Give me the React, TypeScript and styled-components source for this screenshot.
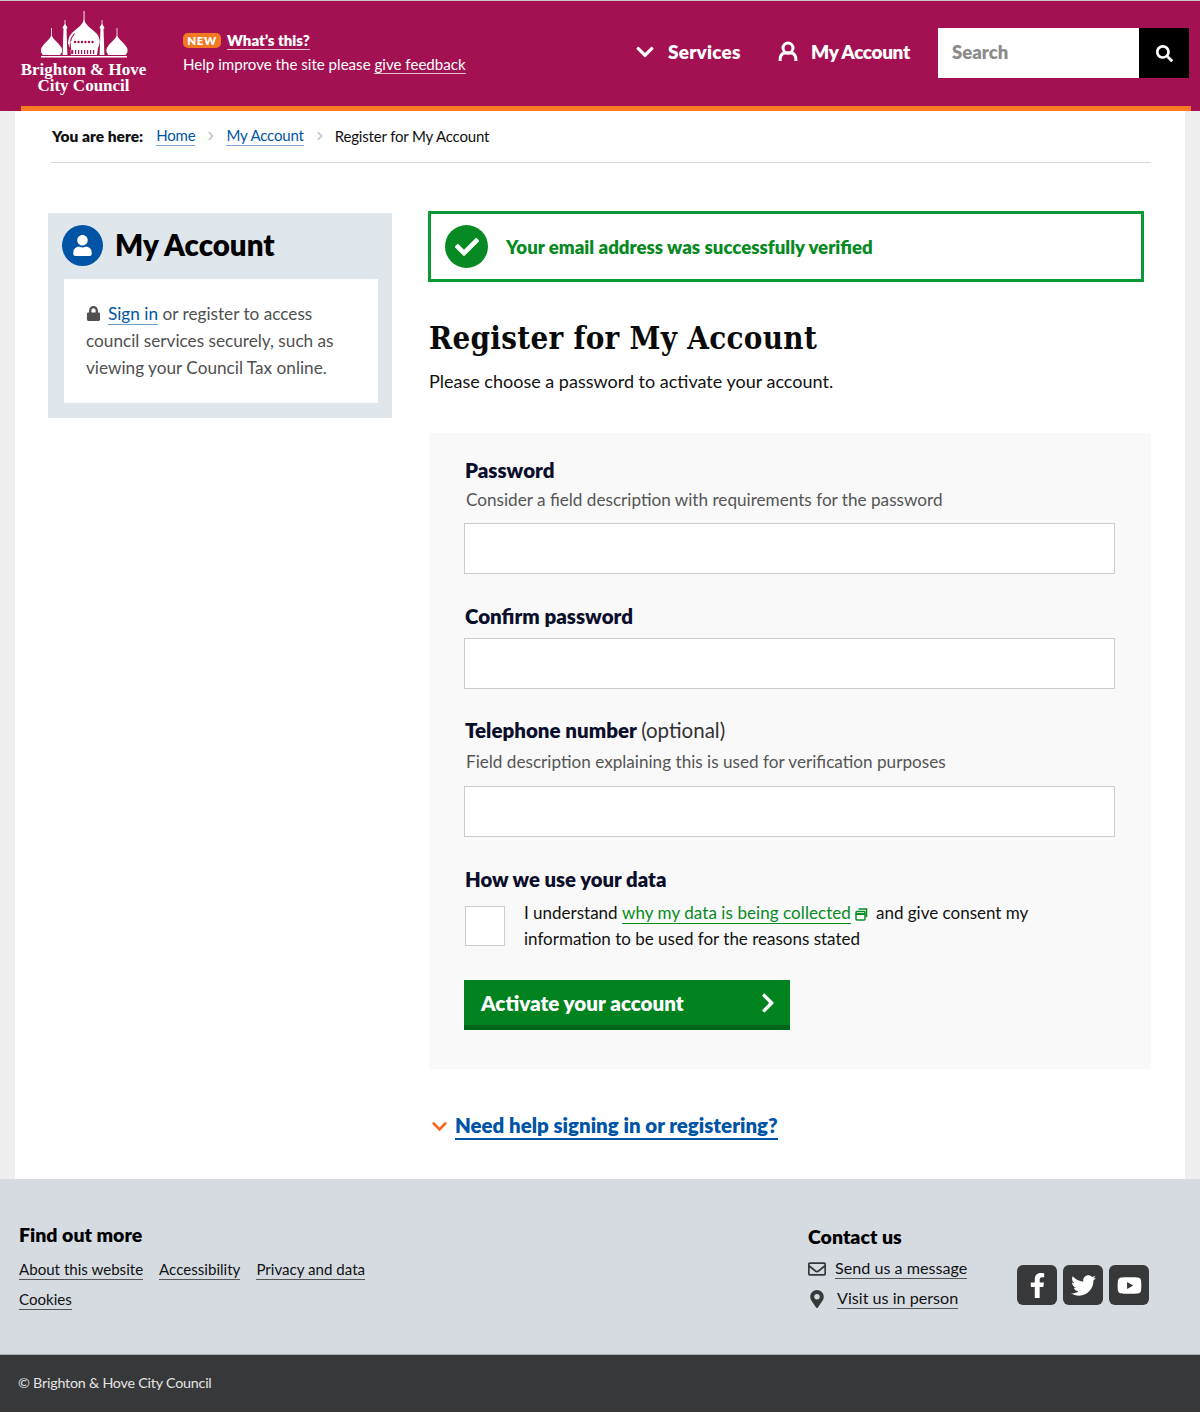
import React from "react";
import styled, { createGlobalStyle } from "styled-components";
import { FaCheck, FaChevronDown, FaChevronRight, FaFacebookF, FaLock, FaMapMarkerAlt, FaRegEnvelope, FaSearch, FaTwitter, FaUser, FaYoutube } from "react-icons/fa";

const Global = createGlobalStyle`
  html, body { margin: 0; padding: 0; background: #eeeeee; }
  body { font-family: "Lato", "Noto Sans", sans-serif; color: #111; }
  * { box-sizing: border-box; }
`;
const Page = styled.div`width: 1200px; height: 1412px; display: flex; flex-direction: column; border-top: 1px solid #c9c3c6;`;
const Header = styled.header`
  position: relative; height: 110px; background: #a31152; display: flex; align-items: flex-start; flex: none; width: 1200px;
  &::after { content: ""; position: absolute; left: 21px; width: 1170px; bottom: 0; height: 5px; background: #f97a22; }
`;
const Logo = styled.a`width: 167px; flex: none; display: flex; flex-direction: column; align-items: center; color: #fff; padding-top: 9px;`;
const LogoLines = styled.div`margin-top: 4px;`;
const LogoLine = styled.div`font: 700 17px/16px "Liberation Serif", serif; text-align: center; height: 16px;`;
const Notice = styled.div`width: 430px; padding: 30px 0 0 16px; flex: none; color: #fff;`;
const NoticeTop = styled.div`display: flex; align-items: center; gap: 6px; height: 18px;`;
const Badge = styled.span`background: #f47721; border-radius: 5px; font: 800 11.5px/15px "Lato", sans-serif; letter-spacing: .5px; width: 38px; text-align: center; color: #fff;`;
const WhatLink = styled.a`font: 800 15px/18px "Lato", sans-serif; color: #fff; border-bottom: 1px solid #e7bdd0;`;
const NoticeText = styled.div`font: 400 15.1px/20px "Lato", sans-serif; margin-top: 5px;`;
const FeedbackLink = styled.a`border-bottom: 1px solid #e7bdd0;`;
const Nav = styled.nav`flex: 1; display: flex; align-items: center; height: 50px; margin-top: 27px; padding-left: 38px;`;
const NavItem = styled.a<{ $w: number; $ls: number }>`display: flex; align-items: center; width: ${p => p.$w}px; gap: 13px; color: #fff; font: 800 19px/24px "Lato", sans-serif; letter-spacing: ${p => p.$ls}px; flex: none; padding-bottom: 3px;`;
const SearchInput = styled.div`width: 201px; height: 50px; background: #fff; color: #8c8c8c; font: 800 18.5px/49px "Lato", sans-serif; padding-left: 14px; flex: none;`;
const SearchButton = styled.div`width: 50px; height: 50px; background: #000; color: #fff; display: flex; align-items: center; justify-content: center; flex: none;`;

const Sheet = styled.main`margin-left: 15px; width: 1170px; background: #fff; height: 1068px; flex: none; padding: 0 34px 0 36px;`;
const Crumbs = styled.div`height: 52px; border-bottom: 1px solid #d9d9d9; display: flex; align-items: center; font-size: 15px; letter-spacing: -.17px; line-height: 20px; padding: 0 0 2px 1px;`;
const CrumbLabel = styled.strong`margin-right: 13px; color: #111; font-weight: 800; font-size: 15.5px; letter-spacing: 0;`;
const CrumbLink = styled.a`color: #0054a6; border-bottom: 1px solid #7fa7d0;`;
const CrumbSep = styled.span`color: #c4c4c4; display: flex; margin: 0 10px 0 11px; font-size: 10px;`;
const Columns = styled.div`display: flex; align-items: flex-start; margin-top: 48px;`;
const Side = styled.aside`width: 344px; margin-left: -3px; margin-top: 2px; background: #dfe6ec; padding: 0 14px 15px 16px; flex: none;`;
const SideHead = styled.div`display: flex; align-items: center; height: 66px; margin-left: -2px; gap: 12px; padding-bottom: 2px;`;
const AvatarCircle = styled.span`width: 41px; height: 41px; border-radius: 50%; background: #0054a6; color: #fff; display: flex; align-items: center; justify-content: center; font-size: 21px; flex: none;`;
const SideTitle = styled.h2`font: 800 29.5px/40px "Lato", sans-serif; margin: 0; color: #000;`;
const SideCard = styled.div`background: #fff; padding: 21px 20px 21px 22px; font-size: 17.2px; line-height: 27px; color: #505050; height: 124px;`;
const SignIn = styled.a`color: #0054a6; border-bottom: 1px solid #6d9bc9; margin-left: 7px;`;
const Main = styled.div`margin-left: 37px; width: 722px; flex: none;`;
const Alert = styled.div`width: 716px; margin-left: -1px; height: 71px; border: 3px solid #0a9a35; display: flex; align-items: center; padding-left: 14px; gap: 18px; color: #078a23; font: 800 18.65px/24px "Lato", sans-serif;`;
const CheckCircle = styled.span`width: 43px; height: 43px; border-radius: 50%; background: #078a23; color: #fff; display: flex; align-items: center; justify-content: center; font-size: 24px; flex: none;`;
const Title = styled.h1`font: 700 31px/44px "DejaVu Serif", serif; font-stretch: condensed; letter-spacing: .3px; margin: 34px 0 0; color: #0a0a0a;`;
const Lead = styled.p`font-size: 18px; line-height: 24px; margin: 9px 0 0; color: #111;`;
const FormPanel = styled.form`background: #f9f9f9; margin-top: 40px; height: 636px; padding: 25px 36px 0 35px;`;
const FieldLabel = styled.label`display: block; font: 800 20.5px/24px "Lato", sans-serif; color: #0b0f2b; padding-left: 1px;`;
const Optional = styled.span`font-weight: 400; color: #333;`;
const Hint = styled.div<{ $mt: number }>`font-size: 17.15px; line-height: 24px; color: #555; padding-left: 2px; margin-top: ${p => p.$mt}px;`;
const TextBox = styled.input<{ $mt: number }>`display: block; width: 651px; height: 51px; margin-top: ${p => p.$mt}px; background: #fff; border: 1px solid #ccc; padding: 0;`;
const Section = styled.div<{ $mt: number }>`margin-top: ${p => p.$mt}px;`;
const DataHead = styled.div`font: 800 20.3px/24px "Lato", sans-serif; color: #0b0f2b; padding-left: 1px;`;
const ConsentRow = styled.div`display: flex; margin-top: 15px; align-items: flex-start;`;
const Tick = styled.span`display: block; width: 40px; height: 40px; border: 1px solid #ccc; background: #fff; flex: none; margin-left: 1px;`;
const ConsentText = styled.div`margin-left: 19px; width: 540px; font-size: 17px; line-height: 26px; color: #111; margin-top: -6px;`;
const DataLink = styled.a`color: #078a23; border-bottom: 1px solid #078a23; letter-spacing: .07px;`;
const Submit = styled.button`display: flex; align-items: center; justify-content: space-between; width: 326px; height: 50px; margin-top: 28px; background: #00821f; border: 0; border-bottom: 5px solid #00661a; color: #fff; font: 800 20.6px/24px "Lato", sans-serif; padding: 0 11px 0 17px;`;
const HelpRow = styled.div`display: flex; align-items: center; margin-top: 44px; gap: 7px; padding-left: 2px;`;
const HelpIcon = styled.span`display: flex; color: #f26a21; font-size: 17px;`;
const HelpLink = styled.a`color: #0054a6; font: 800 20.45px/25px "Lato", sans-serif; border-bottom: 2px solid #0054a6;`;

const FooterTop = styled.footer`height: 175px; background: #d6dbe2; padding: 44px 50px 0 19px; display: flex; flex: none;`;
const FootLeft = styled.div`width: 789px; flex: none;`;
const FootHead = styled.div`font: 800 19.5px/24px "Lato", sans-serif; color: #000;`;
const FootLinks = styled.div`display: flex; flex-wrap: wrap; width: 400px; gap: 9px 16px; margin-top: 12px;`;
const FootLink = styled.a<{ $big?: boolean }>`font-size: ${p => (p.$big ? 16.15 : 15.1)}px; line-height: 20px; color: #111; border-bottom: 1px solid #555;`;
const FootContact = styled.div`width: 209px; flex: none; padding-top: 2px;`;
const ContactRow = styled.div<{ $iconW: number }>`display: flex; align-items: center; color: #37383a; height: 21px; margin-top: 9px; &:first-of-type { margin-top: 13px; } & > span { width: ${p => p.$iconW}px; }`;
const ContactIcon = styled.span`display: flex; font-size: 18px; flex: none;`;
const Socials = styled.div`display: flex; gap: 6px; margin-top: 42px;`;
const Social = styled.a`width: 40px; height: 40px; border-radius: 6px; background: #37383a; color: #fff; display: flex; align-items: center; justify-content: center; font-size: 25px;`;
const FooterBottom = styled.div`flex: 1; background: #37383a; color: #e4e4e4; font-size: 14.3px; letter-spacing: -.22px; line-height: 20px; padding: 18px 0 0 18px; border-top: 1px solid #a9acb0;`;

const Pavilion = () => (
  <svg width="90" height="48" viewBox="0 0 90 48" fill="#fff" aria-hidden="true">
    <path d="M44.600 1h.9v10h-.9z" />
    <path d="M45 9C44 15 38 18 33 23 29 27 28 33 31 38l1 7h26l1-7c3-5 2-11-2-15C52 18 46 15 45 9z" />
    <path d="M35.500 23.500C30.500 29 30 36 33 44" stroke="#a31152" strokeWidth="1.100" fill="none" />
    <path d="M29 32h3M29 33.500h2" stroke="#fff" strokeWidth="1" />
    <g fill="#a31152">
      <circle cx="36" cy="32" r="1.200" /><circle cx="39.500" cy="32" r="1.200" /><circle cx="43" cy="32" r="1.200" /><circle cx="46.500" cy="32" r="1.200" /><circle cx="50" cy="32" r="1.200" /><circle cx="53.500" cy="32" r="1.200" />
      <path d="M33 40h1.200v4H33zM36 40h1.200v4H36zM39 40h1.200v4H39zM42 40h1.200v4H42zM45 40h1.200v4H45zM48 40h1.200v4H48zM51 40h1.200v4H51zM54 40h1.200v4H54z" />
    </g>
    <path d="M12.100 18h.8v7h-.8zM77.600 18h.8v7h-.8z" />
    <path d="M12.500 24C12 29 6 32 3 37c-2 3-1 6 1 8h17c2-2 3-5 1-8-3-5-9-8-9.500-13z" />
    <path d="M78 24c-.5 5-6.500 8-9.500 13-2 3-1 6 1 8h17c2-2 3-5 1-8-3-5-9-8-9.500-13z" />
    <path d="M25.600 10h.8v5h-.8zM62.600 10h.8v5h-.8z" />
    <path d="M26 14c1 1.500 2.400 2.500 2.400 4l-.9 1 .9 26h-4.800l.9-26-.9-1c0-1.500 1.400-2.500 2.400-4z" />
    <path d="M63 14c1 1.500 2.400 2.500 2.400 4l-.9 1 .9 26h-4.800l.9-26-.9-1c0-1.500 1.400-2.500 2.400-4z" />
    <path d="M2 46h86v1.400H2z" />
  </svg>
);
const OutlineUser = () => (
  <svg width="20" height="21" viewBox="0 0 20 21" fill="none" stroke="#fff" strokeWidth="3" aria-hidden="true">
    <circle cx="10" cy="7" r="5" />
    <path d="M2 20c0-5 2-8 5-8h6c3 0 5 3 5 8" />
  </svg>
);
const WindowIcon = () => (
  <svg width="13" height="13" viewBox="0 0 13 13" fill="none" stroke="#078a23" strokeWidth="1.500" style={{ margin: "0 8px 0 4px", verticalAlign: "-2px" }} aria-hidden="true">
    <rect x="1" y="3.500" width="9" height="8.500" rx="1" />
    <path d="M3.500 1h8v8" />
    <path d="M1 6h9" strokeWidth="2" />
  </svg>
);

export default function App() {
  return (
    <Page>
      <Global />
      <Header>
        <Logo>
          <Pavilion />
          <LogoLines>
            <LogoLine>Brighton &amp; Hove</LogoLine>
            <LogoLine>City Council</LogoLine>
          </LogoLines>
        </Logo>
        <Notice>
          <NoticeTop><Badge>NEW</Badge><WhatLink>What’s this?</WhatLink></NoticeTop>
          <NoticeText>Help improve the site please <FeedbackLink>give feedback</FeedbackLink></NoticeText>
        </Notice>
        <Nav>
          <NavItem $w={143} $ls={.2}><FaChevronDown size={20} />Services</NavItem>
          <NavItem $w={160} $ls={-.4}><OutlineUser />My Account</NavItem>
          <SearchInput>Search</SearchInput>
          <SearchButton><FaSearch size={17} /></SearchButton>
        </Nav>
      </Header>
      <Sheet>
        <Crumbs>
          <CrumbLabel>You are here:</CrumbLabel>
          <CrumbLink>Home</CrumbLink><CrumbSep><FaChevronRight /></CrumbSep>
          <CrumbLink>My Account</CrumbLink><CrumbSep><FaChevronRight /></CrumbSep>
          <span>Register for My Account</span>
        </Crumbs>
        <Columns>
          <Side>
            <SideHead><AvatarCircle><FaUser /></AvatarCircle><SideTitle>My Account</SideTitle></SideHead>
            <SideCard>
              <FaLock size={15} style={{ verticalAlign: "-1px" }} /><SignIn>Sign in</SignIn> or register to access<br />
              council services securely, such as<br />viewing your Council Tax online.
            </SideCard>
          </Side>
          <Main>
            <Alert><CheckCircle><FaCheck /></CheckCircle>Your email address was successfully verified</Alert>
            <Title>Register for My Account</Title>
            <Lead>Please choose a password to activate your account.</Lead>
            <FormPanel>
              <FieldLabel>Password</FieldLabel>
              <Hint $mt={6}>Consider a field description with requirements for the password</Hint>
              <TextBox $mt={11} />
              <Section $mt={30}>
                <FieldLabel>Confirm password</FieldLabel>
                <TextBox $mt={10} />
              </Section>
              <Section $mt={29}>
                <FieldLabel>Telephone number <Optional>(optional)</Optional></FieldLabel>
                <Hint $mt={8}>Field description explaining this is used for verification purposes</Hint>
                <TextBox $mt={12} />
              </Section>
              <Section $mt={30}>
                <DataHead>How we use your data</DataHead>
                <ConsentRow>
                  <Tick />
                  <ConsentText>I understand <DataLink>why my data is being collected</DataLink><WindowIcon />and give consent my<br />information to be used for the reasons stated</ConsentText>
                </ConsentRow>
              </Section>
              <Submit type="button">Activate your account<FaChevronRight size={22} /></Submit>
            </FormPanel>
            <HelpRow><HelpIcon><FaChevronDown /></HelpIcon><HelpLink>Need help signing in or registering?</HelpLink></HelpRow>
          </Main>
        </Columns>
      </Sheet>
      <FooterTop>
        <FootLeft>
          <FootHead>Find out more</FootHead>
          <FootLinks>
            <FootLink>About this website</FootLink><FootLink>Accessibility</FootLink><FootLink>Privacy and data</FootLink><FootLink>Cookies</FootLink>
          </FootLinks>
        </FootLeft>
        <FootContact>
          <FootHead>Contact us</FootHead>
          <ContactRow $iconW={27}><ContactIcon><FaRegEnvelope /></ContactIcon><FootLink $big>Send us a message</FootLink></ContactRow>
          <ContactRow $iconW={29}><ContactIcon><FaMapMarkerAlt /></ContactIcon><FootLink $big>Visit us in person</FootLink></ContactRow>
        </FootContact>
        <Socials>
          <Social><FaFacebookF /></Social><Social><FaTwitter /></Social><Social><FaYoutube /></Social>
        </Socials>
      </FooterTop>
      <FooterBottom>© Brighton &amp; Hove City Council</FooterBottom>
    </Page>
  );
}
